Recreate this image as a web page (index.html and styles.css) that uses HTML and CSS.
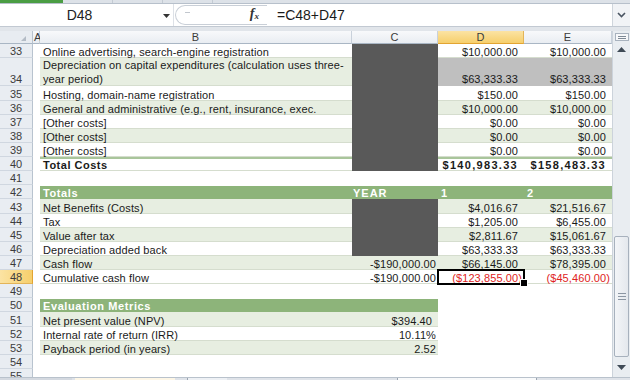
FILE: index.html
```html
<!DOCTYPE html>
<html>
<head>
<meta charset="utf-8">
<link rel="stylesheet" href="styles.css">
</head>
<body>
<div class="app">
  <div class="ribbon-edge"><span class="file-green"></span><span class="rb-seg"></span><span class="rb-seg"></span><span class="rb-seg"></span></div>
  <div class="fbar">
    <div class="namebox"><span class="nb-text">D48</span><span class="nb-arrow"><svg width="7" height="4" viewBox="0 0 7 4"><path d="M0 0h7L3.5 4z" fill="#333"/></svg></span></div>
    <div class="fxg"><span class="fx-dash"></span><span class="fx"><i>f</i><sub>x</sub></span></div>
    <div class="formula">=C48+D47</div>
    <div class="fexpand"><svg width="9" height="6" viewBox="0 0 9 6"><path d="M1 1l3.5 3.5L8 1" fill="none" stroke="#4a5562" stroke-width="1.6"/></svg></div>
  </div>
  <div class="gap"></div>
  <div class="main">
    <div class="sheet">
      <div class="hdr">
        <div class="corner"><span class="tri"></span></div>
        <div class="ch cha">A</div>
        <div class="ch">B</div>
        <div class="ch">C</div>
        <div class="ch chsel">D</div>
        <div class="ch">E</div>
      </div>

      <div class="r">
        <div class="rh"><span>33</span></div><div class="c"></div>
        <div class="c t tx"><span>Online advertising, search-engine registration</span></div>
        <div class="c dk"></div>
        <div class="c t n"><span>$10,000.00</span></div>
        <div class="c t n"><span>$10,000.00</span></div>
      </div>
      <div class="r tall">
        <div class="rh"><span>34</span></div><div class="c"></div>
        <div class="c t tx bd"><span>Depreciation on capital expenditures (calculation uses three-<br>year period)</span></div>
        <div class="c dk"></div>
        <div class="c gr n"><span>$63,333.33</span></div>
        <div class="c gr n"><span>$63,333.33</span></div>
      </div>
      <div class="r">
        <div class="rh"><span>35</span></div><div class="c"></div>
        <div class="c t tx"><span>Hosting, domain-name registration</span></div>
        <div class="c dk"></div>
        <div class="c t n"><span>$150.00</span></div>
        <div class="c t n"><span>$150.00</span></div>
      </div>
      <div class="r">
        <div class="rh"><span>36</span></div><div class="c"></div>
        <div class="c t tx bd"><span>General and administrative (e.g., rent, insurance, exec.</span></div>
        <div class="c dk"></div>
        <div class="c t n bd"><span>$10,000.00</span></div>
        <div class="c t n bd"><span>$10,000.00</span></div>
      </div>
      <div class="r">
        <div class="rh"><span>37</span></div><div class="c"></div>
        <div class="c t tx"><span>[Other costs]</span></div>
        <div class="c dk"></div>
        <div class="c t n"><span>$0.00</span></div>
        <div class="c t n"><span>$0.00</span></div>
      </div>
      <div class="r">
        <div class="rh"><span>38</span></div><div class="c"></div>
        <div class="c t tx bd"><span>[Other costs]</span></div>
        <div class="c dk"></div>
        <div class="c t n bd"><span>$0.00</span></div>
        <div class="c t n bd"><span>$0.00</span></div>
      </div>
      <div class="r">
        <div class="rh"><span>39</span></div><div class="c"></div>
        <div class="c t tx"><span>[Other costs]</span></div>
        <div class="c dk"></div>
        <div class="c t n"><span>$0.00</span></div>
        <div class="c t n"><span>$0.00</span></div>
      </div>
      <div class="r total">
        <div class="rh"><span>40</span></div><div class="c"></div>
        <div class="c t tx tl"><span>Total Costs</span></div>
        <div class="c dk"></div>
        <div class="c t n tl tn"><span>$140,983.33</span></div>
        <div class="c t n tl tn"><span>$158,483.33</span></div>
      </div>
      <div class="r">
        <div class="rh"><span>41</span></div><div class="c"></div><div class="c"></div><div class="c"></div><div class="c"></div><div class="c"></div>
      </div>
      <div class="r">
        <div class="rh"><span>42</span></div><div class="c"></div>
        <div class="c gh tx"><span>Totals</span></div>
        <div class="c gh ghc"><span>YEAR</span></div>
        <div class="c gh tx"><span>1</span></div>
        <div class="c gh tx"><span>2</span></div>
      </div>
      <div class="r">
        <div class="rh"><span>43</span></div><div class="c"></div>
        <div class="c t tx bd"><span>Net Benefits (Costs)</span></div>
        <div class="c dk"></div>
        <div class="c t n bd"><span>$4,016.67</span></div>
        <div class="c t n bd"><span>$21,516.67</span></div>
      </div>
      <div class="r">
        <div class="rh"><span>44</span></div><div class="c"></div>
        <div class="c t tx"><span>Tax</span></div>
        <div class="c dk"></div>
        <div class="c t n"><span>$1,205.00</span></div>
        <div class="c t n"><span>$6,455.00</span></div>
      </div>
      <div class="r">
        <div class="rh"><span>45</span></div><div class="c"></div>
        <div class="c t tx bd"><span>Value after tax</span></div>
        <div class="c dk"></div>
        <div class="c t n bd"><span>$2,811.67</span></div>
        <div class="c t n bd"><span>$15,061.67</span></div>
      </div>
      <div class="r">
        <div class="rh"><span>46</span></div><div class="c"></div>
        <div class="c t tx"><span>Depreciation added back</span></div>
        <div class="c dk"></div>
        <div class="c t n"><span>$63,333.33</span></div>
        <div class="c t n"><span>$63,333.33</span></div>
      </div>
      <div class="r">
        <div class="rh"><span>47</span></div><div class="c"></div>
        <div class="c t tx bd"><span>Cash flow</span></div>
        <div class="c t n np bd"><span>-$190,000.00</span></div>
        <div class="c t n bd"><span>$66,145.00</span></div>
        <div class="c t n bd"><span>$78,395.00</span></div>
      </div>
      <div class="r">
        <div class="rh rhsel"><span>48</span></div><div class="c"></div>
        <div class="c t tx"><span>Cumulative cash flow</span></div>
        <div class="c t n np"><span>-$190,000.00</span></div>
        <div class="c t n np neg active"><span>($123,855.00)</span></div>
        <div class="c t n np neg"><span>($45,460.00)</span></div>
      </div>
      <div class="r">
        <div class="rh"><span>49</span></div><div class="c"></div><div class="c"></div><div class="c"></div><div class="c"></div><div class="c"></div>
      </div>
      <div class="r">
        <div class="rh"><span>50</span></div><div class="c"></div>
        <div class="c gh tx"><span>Evaluation Metrics</span></div>
        <div class="c gh"></div>
        <div class="c"></div><div class="c"></div>
      </div>
      <div class="r">
        <div class="rh"><span>51</span></div><div class="c"></div>
        <div class="c t tx bd"><span>Net present value (NPV)</span></div>
        <div class="c t n bd"><span>$394.40</span></div>
        <div class="c"></div><div class="c"></div>
      </div>
      <div class="r">
        <div class="rh"><span>52</span></div><div class="c"></div>
        <div class="c t tx"><span>Internal rate of return (IRR)</span></div>
        <div class="c t n np"><span>10.11%</span></div>
        <div class="c"></div><div class="c"></div>
      </div>
      <div class="r">
        <div class="rh"><span>53</span></div><div class="c"></div>
        <div class="c t tx bd"><span>Payback period (in years)</span></div>
        <div class="c t n np bd"><span>2.52</span></div>
        <div class="c"></div><div class="c"></div>
      </div>
      <div class="r">
        <div class="rh"><span>54</span></div><div class="c"></div><div class="c"></div><div class="c"></div><div class="c"></div><div class="c"></div>
      </div>
      <div class="r">
        <div class="rh"><span>55</span></div><div class="c"></div><div class="c"></div><div class="c"></div><div class="c"></div><div class="c"></div>
      </div>
    </div>
    <div class="vscroll">
      <div class="vs-split"><span></span><span></span></div>
      <div class="vs-btn"><svg width="9" height="5" viewBox="0 0 9 5"><path d="M0 5h9L4.5 0z" fill="#3f4a56"/></svg></div>
      <div class="vs-track"></div>
      <div class="vs-thumb"><span class="grip"></span><span class="grip"></span><span class="grip"></span></div>
      <div class="vs-btn vs-down"><svg width="9" height="5" viewBox="0 0 9 5"><path d="M0 0h9L4.5 5z" fill="#3f4a56"/></svg></div>
    </div>
  </div>
  <div class="tabs">
    <span class="tb-nav"></span>
    <span class="tb-sheet"></span>
    <span class="tb-new"></span>
    <span class="tb-fill"></span>
    <span class="tb-hs"></span>
    <span class="tb-end"></span>
  </div>
</div>
</body>
</html>
```

FILE: styles.css
```css
* { box-sizing: border-box; }
html, body { margin: 0; padding: 0; }
body {
  width: 630px;
  height: 380px;
  overflow: hidden;
  background: #fff;
  font-family: "Liberation Sans", Arial, sans-serif;
  color: #1a1a1a;
}
.app {
  width: 630px;
  height: 380px;
  display: flex;
  flex-direction: column;
  overflow: hidden;
}

/* ribbon remnant */
.ribbon-edge {
  height: 4px;
  background: #dde2e8;
  border-bottom: 1px solid #b7c0cb;
  display: flex;
}
.file-green { width: 63px; height: 3px; background: #4a9d43; }
.rb-seg { width: 50px; height: 3px; border-right: 1px solid #c3cad3; }

/* formula bar */
.fbar {
  height: 23px;
  display: flex;
  background: #fff;
  border-bottom: 1px solid #c2c9d2;
}
.namebox {
  width: 174px;
  display: flex;
  align-items: center;
  border-right: 1px solid #dde1e7;
}
.nb-text {
  width: 160px;
  text-align: center;
  font-size: 14px;
  color: #222;
}
.nb-arrow { width: 14px; display: flex; justify-content: center; padding-top: 1px; }
.fxg {
  width: 92px;
  margin: 1px 0 1px 1px;
  border: 1px solid #c9cfd7;
  border-right: none;
  border-radius: 10px 0 0 10px;
  display: flex;
  align-items: center;
  justify-content: space-between;
  padding: 0 8px 0 9px;
}
.fx-dash { width: 5px; height: 1px; background: #c2c7ce; margin-top: -6px; }
.fx {
  font-family: "Liberation Serif", "Times New Roman", serif;
  font-weight: bold;
  font-size: 14px;
  color: #333;
  line-height: 14px;
}
.fx sub { font-size: 9px; vertical-align: -1px; font-style: italic; }
.formula {
  flex: 1;
  font-size: 14px;
  line-height: 22px;
  padding-left: 10px;
  color: #1a1a1a;
}
.fexpand {
  width: 18px;
  border-left: 1px solid #cfd5dc;
  background: #f1f3f6;
  display: flex;
  align-items: center;
  justify-content: center;
}
.gap { height: 4px; background: #e1e5ea; }

/* main */
.main { height: 346px; display: flex; }
.sheet { width: 612px; overflow: hidden; }

.hdr, .r {
  display: grid;
  grid-template-columns: 33px 7px 312px 86px 86px 88px;
}
.hdr { height: 13px; }
.corner {
  background: #e8ecf1;
  border-right: 1px solid #b8c3cf;
  border-bottom: 1px solid #a9b6c4;
  position: relative;
}
.tri {
  position: absolute;
  right: 6px;
  bottom: 2px;
  width: 0;
  height: 0;
  border-left: 5px solid transparent;
  border-bottom: 5px solid #b4bcc6;
}
.ch {
  background: linear-gradient(#f8f9fb, #e9edf2);
  border-right: 1px solid #c9d1db;
  border-bottom: 1px solid #a9b6c4;
  font-size: 11px;
  line-height: 12px;
  text-align: center;
  color: #3b3b3b;
  white-space: nowrap;
}
.cha { overflow: visible; text-indent: 1px; }
.chsel {
  background: linear-gradient(#fbe3a3, #f6cf6c);
  border-bottom: 1px solid #e2a431;
  border-right-color: #e3b458;
}

.r { height: 14.13px; }
.r.tall { height: 28.26px; }

.rh {
  background: #e9edf2;
  border-right: 1px solid #b8c3cf;
  border-bottom: 1px solid #d0d7e0;
  font-size: 11px;
  line-height: 14px;
  color: #3c3c3c;
  display: flex;
  align-items: flex-end;
  justify-content: center;
}
.rh > span { margin-bottom: -1px; }
.rhsel {
  background: linear-gradient(90deg, #fbe3a3, #f6cf6c);
  border-right: 1px solid #e2a431;
  border-bottom-color: #e3b458;
}

.c {
  display: flex;
  align-items: flex-end;
  font-size: 11px;
  line-height: 14px;
  letter-spacing: 0.1px;
  white-space: nowrap;
  border-bottom: 1px solid transparent;
  min-width: 0;
}
.c > span { margin-bottom: -2px; }
.tall .c > span { margin-bottom: -1px; }
.t { border-bottom-color: #d5ddce; }
.tx { padding-left: 3px; }
.n { justify-content: flex-end; padding-right: 6px; }
.np { padding-right: 2px; }
.bd { background: #e7eee1; }
.dk { background: #595959; border-bottom-color: #595959; }
.gr { background: #bfbfbf; border-bottom-color: #bfbfbf; }
.gh {
  background: #8db47a;
  color: #fff;
  font-weight: bold;
  letter-spacing: 0.6px;
  border-top: 1px solid #fff;
}
.ghc { padding-left: 1px; letter-spacing: 1px; }
.neg { color: #e0231c; }
.tl { font-weight: bold; letter-spacing: 0.5px; }
.tn { letter-spacing: 1.3px; }
.total .c.t { box-shadow: inset 0 2px 0 #a9c59b; }

.active {
  position: relative;
  outline: 2px solid #000;
  outline-offset: -1px;
  z-index: 1;
}
.active::after {
  content: "";
  position: absolute;
  right: -4px;
  bottom: -4px;
  width: 6px;
  height: 6px;
  background: #000;
  border: 1px solid #fff;
}

/* vertical scrollbar */
.vscroll {
  width: 18px;
  background: #e9edf1;
  border-left: 1px solid #ccd3db;
  display: flex;
  flex-direction: column;
  align-items: center;
}
.vs-split {
  width: 14px;
  height: 8px;
  margin-top: 2px;
  border: 1px solid #a8b2be;
  background: #f7f8fa;
  display: flex;
  flex-direction: column;
  justify-content: center;
  gap: 1px;
  padding: 0 2px;
}
.vs-split span { height: 1px; background: #7f8a96; }
.vs-btn {
  height: 16px;
  width: 16px;
  display: flex;
  align-items: center;
  justify-content: center;
}
.vs-track { height: 179px; }
.vs-thumb {
  width: 15px;
  height: 121px;
  border: 1px solid #a7b1bd;
  border-radius: 2px;
  background: linear-gradient(90deg, #f3f5f8, #e4e8ed);
  display: flex;
  flex-direction: column;
  align-items: center;
  justify-content: center;
  gap: 2px;
}
.grip { width: 8px; height: 1px; background: #8b96a3; }
.vs-down { margin-top: auto; height: 20px; }

/* sheet tabs */
.tabs {
  height: 3px;
  display: flex;
  background: #dfe3e9;
  border-top: 1px solid #b9c2cc;
}
.tb-nav { width: 72px; background: #d4d9e0; }
.tb-sheet { width: 100px; background: #fdf6e6; margin-left: 3px; }
.tb-new { width: 40px; background: #eef1f5; margin-left: 12px; border-left: 1px solid #9aa4b0; }
.tb-fill { width: 145px; }
.tb-hs { width: 140px; background: #f9fafb; border-left: 1px solid #9aa4b0; border-right: 1px solid #9aa4b0; margin-left: 25px; }
.tb-end { flex: 1; }
```
